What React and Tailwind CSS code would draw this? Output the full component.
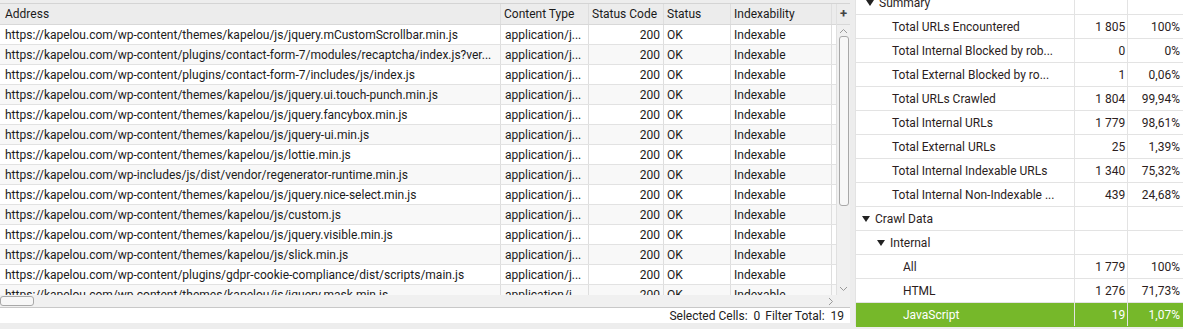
import React from 'react';

const urls = [
  'https://kapelou.com/wp-content/themes/kapelou/js/jquery.mCustomScrollbar.min.js',
  'https://kapelou.com/wp-content/plugins/contact-form-7/modules/recaptcha/index.js?ver...',
  'https://kapelou.com/wp-content/plugins/contact-form-7/includes/js/index.js',
  'https://kapelou.com/wp-content/themes/kapelou/js/jquery.ui.touch-punch.min.js',
  'https://kapelou.com/wp-content/themes/kapelou/js/jquery.fancybox.min.js',
  'https://kapelou.com/wp-content/themes/kapelou/js/jquery-ui.min.js',
  'https://kapelou.com/wp-content/themes/kapelou/js/lottie.min.js',
  'https://kapelou.com/wp-includes/js/dist/vendor/regenerator-runtime.min.js',
  'https://kapelou.com/wp-content/themes/kapelou/js/jquery.nice-select.min.js',
  'https://kapelou.com/wp-content/themes/kapelou/js/custom.js',
  'https://kapelou.com/wp-content/themes/kapelou/js/jquery.visible.min.js',
  'https://kapelou.com/wp-content/themes/kapelou/js/slick.min.js',
  'https://kapelou.com/wp-content/plugins/gdpr-cookie-compliance/dist/scripts/main.js',
  'https://kapelou.com/wp-content/themes/kapelou/js/jquery.mask.min.js',
];

const summary = [
  { label: 'Total URLs Encountered', value: '1 805', pct: '100%', indent: 'pl-[36px]' },
  { label: 'Total Internal Blocked by rob...', value: '0', pct: '0%', indent: 'pl-[36px]' },
  { label: 'Total External Blocked by ro...', value: '1', pct: '0,06%', indent: 'pl-[36px]' },
  { label: 'Total URLs Crawled', value: '1 804', pct: '99,94%', indent: 'pl-[36px]' },
  { label: 'Total Internal URLs', value: '1 779', pct: '98,61%', indent: 'pl-[36px]' },
  { label: 'Total External URLs', value: '25', pct: '1,39%', indent: 'pl-[36px]' },
  { label: 'Total Internal Indexable URLs', value: '1 340', pct: '75,32%', indent: 'pl-[36px]' },
  { label: 'Total Internal Non-Indexable ...', value: '439', pct: '24,68%', indent: 'pl-[36px]' },
];

const Caret = () => (
  <svg width="8" height="6" viewBox="0 0 8 6" className="shrink-0">
    <path d="M0 0 L8 0 L4 6 Z" fill="#222" />
  </svg>
);

const Cell = ({ className = '', children }) => (
  <div className={`h-full border-r border-[#dedede] flex items-center overflow-hidden whitespace-nowrap ${className}`}>
    {children}
  </div>
);

const TreeRow = ({ label, value, pct, indent, caret, selected }) => (
  <div className={`h-[24px] shrink-0 flex border-b ${selected ? 'bg-[#76b82a] text-white border-[#76b82a]' : 'border-[#e3e3e3] text-[#2b1d1d]'}`}>
    <div className={`w-[220px] h-full flex items-center gap-[5px] border-r border-[#e3e3e3] ${indent}`}>
      {caret && <Caret />}
      <span>{label}</span>
    </div>
    <div className="w-[53px] h-full flex items-center justify-end pr-[2px] border-r border-[#e3e3e3]">{value}</div>
    <div className="w-[55px] h-full flex items-center justify-end pr-[3px]">{pct}</div>
  </div>
);

export default function App() {
  return (
    <div className="w-[1183px] h-[329px] bg-[#ededed] flex overflow-hidden font-['Roboto',sans-serif] text-[12px] text-[#1b1b1b]">
      <div className="w-[850px] flex flex-col">
        <div className="h-[3px]" />
        <div className="h-[292px] flex border-t border-[#d4d4d4] overflow-hidden">
          <div className="w-[836px] flex flex-col bg-white overflow-hidden">
            <div className="h-[21px] shrink-0 flex bg-[#ececec] border-b border-[#d8d8d8]">
              <Cell className="w-[501px] pl-[5px]">Address</Cell>
              <Cell className="w-[88px] pl-[3px]">Content Type</Cell>
              <Cell className="w-[75px] pl-[3px]">Status Code</Cell>
              <Cell className="w-[67px] pl-[3px]">Status</Cell>
              <Cell className="w-[101px] pl-[3px]">Indexability</Cell>
              <div className="w-[4px] h-full" />
            </div>
            {urls.map((u, i) => (
              <div key={i} className={`h-[20px] shrink-0 flex border-b border-[#e2e2e2] ${i % 2 ? 'bg-[#f8f8f8]' : 'bg-white'}`}>
                <Cell className="w-[501px] pl-[5px]">{u}</Cell>
                <Cell className="w-[88px] pl-[4px]">application/j...</Cell>
                <Cell className="w-[75px] justify-end pr-[3px]">200</Cell>
                <Cell className="w-[67px] pl-[3px]">OK</Cell>
                <Cell className="w-[101px] pl-[3px]">Indexable</Cell>
                <div className="w-[4px] h-full" />
              </div>
            ))}
          </div>
          <div className="w-[14px] flex flex-col items-center bg-[#f0f0f0] border-l border-[#e0e0e0]">
            <div className="h-[21px] w-full flex items-center justify-center bg-[#ececec] border-b border-[#d8d8d8] text-[13px] font-bold text-[#444]">+</div>
            <svg width="9" height="6" viewBox="0 0 9 6" className="mt-[3px]">
              <path d="M1 5 L4.5 1.5 L8 5" stroke="#9a9a9a" fill="none" strokeWidth="1" />
            </svg>
            <div className="mt-[2px] w-[10px] h-[170px] rounded-[3px] border border-[#a8a8a8] bg-[#f7f7f7]" />
            <div className="flex-1" />
            <svg width="9" height="6" viewBox="0 0 9 6" className="mb-[3px]">
              <path d="M1 1 L4.5 4.5 L8 1" stroke="#9a9a9a" fill="none" strokeWidth="1" />
            </svg>
          </div>
        </div>
        <div className="h-[13px] flex items-center bg-[#f0f0f0] border-b border-[#c8c8c8]">
          <div className="w-[34px] h-[10px] rounded-[3px] border border-[#a8a8a8] bg-[#f7f7f7]" />
          <div className="flex-1" />
          <svg width="6" height="9" viewBox="0 0 6 9" className="mr-[16px]">
            <path d="M1 1 L4.5 4.5 L1 8" stroke="#9a9a9a" fill="none" strokeWidth="1" />
          </svg>
        </div>
        <div className="h-[15px] bg-white flex items-center justify-end pr-[6px] gap-[5px] text-[#222]">
          <span>Selected Cells:&nbsp; 0</span>
          <span>Filter Total:&nbsp; 19</span>
        </div>
      </div>
      <div className="w-[5px]" />
      <div className="w-[328px] flex flex-col bg-white -mt-[9px] h-[335px] border-l border-[#e3e3e3]">
        <TreeRow label="Summary" indent="pl-[10px]" caret />
        {summary.map((r) => (
          <TreeRow key={r.label} {...r} />
        ))}
        <TreeRow label="Crawl Data" indent="pl-[6px]" caret />
        <TreeRow label="Internal" indent="pl-[21px]" caret />
        <TreeRow label="All" value="1 779" pct="100%" indent="pl-[47px]" />
        <TreeRow label="HTML" value="1 276" pct="71,73%" indent="pl-[47px]" />
        <TreeRow label="JavaScript" value="19" pct="1,07%" indent="pl-[47px]" selected />
      </div>
    </div>
  );
}
